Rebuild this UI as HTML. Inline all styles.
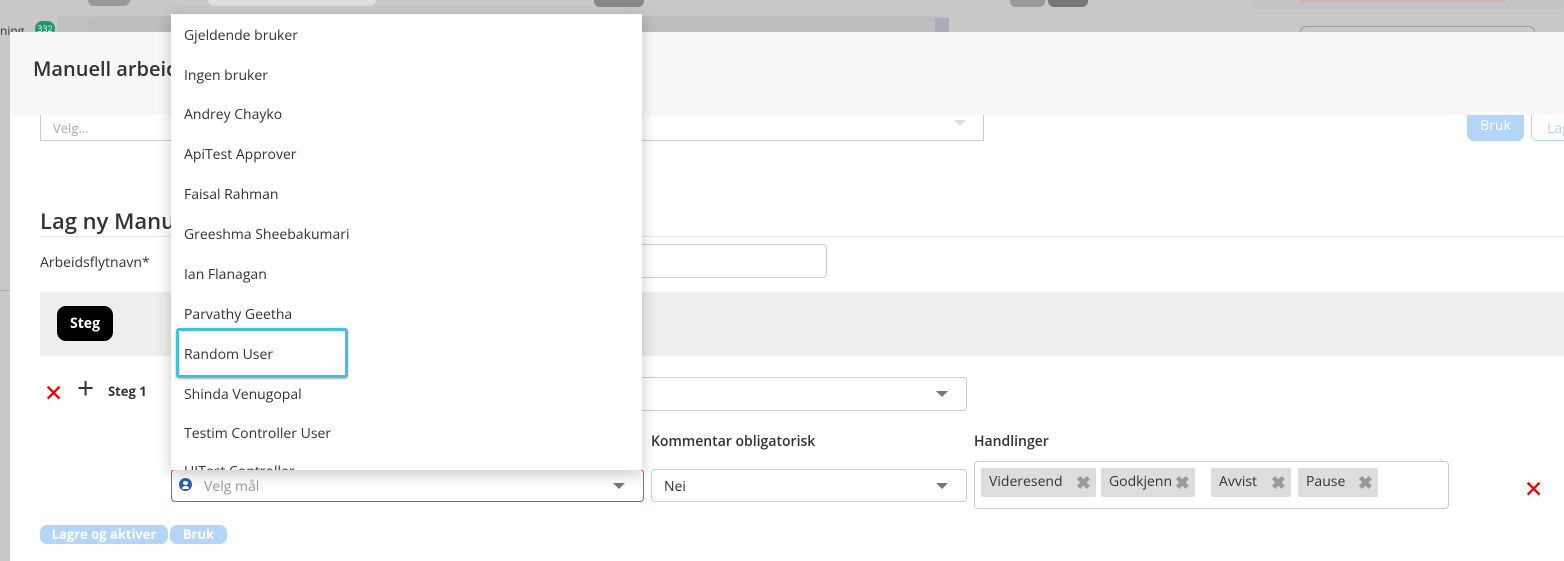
<!DOCTYPE html>
<html><head><meta charset="utf-8"><style>
*{box-sizing:border-box;margin:0;padding:0}
body{width:1564px;height:561px;overflow:hidden;background:#c8c8c8;font-family:"Open Sans","Liberation Sans",sans-serif;position:relative;color:#333}
.a{position:absolute}
.modal{left:10px;top:32px;width:1554px;height:529px;background:#fff}
.hdr{left:10px;top:32px;width:1554px;height:83px;background:#f8f8f8}
.inp{border:1px solid #ccc;border-radius:4px;background:#fff}
.caret{width:0;height:0;border-left:6px solid transparent;border-right:6px solid transparent;border-top:6px solid #777}
.dd{left:171px;top:14px;width:471px;height:456px;background:#fff;box-shadow:0 4px 14px rgba(0,0,0,.22);overflow:hidden}
.dd div{position:absolute;left:13px;font-size:14px;color:#333}
.chip{position:absolute;top:468px;height:29px;background:#ddd;border-radius:2px;font-size:14px;line-height:28px;padding-left:8px;color:#333}
.chip b{position:absolute;right:5px;top:1px;color:#999;font-size:18px}
.btn{background:#b3d6f8;color:#fff;font-size:13px;font-weight:bold;border-radius:7px;text-align:center}
</style></head><body>
<div class="a" style="left:88px;top:0;width:42px;height:6px;background:#999;border-radius:0 0 6px 6px"></div>
<div class="a" style="left:208px;top:0;width:168px;height:6px;background:#ddd;border-radius:0 0 6px 6px"></div>
<div class="a" style="left:594px;top:0;width:50px;height:7px;background:#888;border-radius:0 0 6px 6px"></div>
<div class="a" style="left:1010px;top:0;width:35px;height:7px;background:#999;border-radius:0 0 6px 6px"></div>
<div class="a" style="left:1048px;top:0;width:40px;height:7px;background:#777;border-radius:0 0 6px 6px"></div>
<div class="a" style="left:1250px;top:0;width:314px;height:10px;background:#c4c4c4;border-radius:0 0 8px 8px"></div>
<div class="a" style="left:1300px;top:0;width:205px;height:2px;background:#d8b0b0"></div>
<div class="a" style="left:57px;top:16px;width:120px;height:16px;background:#bfbfbf"></div>
<div class="a" style="left:0;top:22px;font-size:12px;color:#333">ning</div>
<div class="a" style="left:35px;top:21px;width:20px;height:15px;background:#1b9a6a;border-radius:8px;color:#fff;font-size:9px;text-align:center;line-height:15px">332</div>
<div class="a" style="left:88px;top:16px;width:860px;height:16px;background:#bdbdbd;border-radius:8px 8px 0 0"></div>
<div class="a" style="left:935px;top:18px;width:14px;height:14px;background:#aab"></div>
<div class="a" style="left:1300px;top:26px;width:235px;height:8px;border:1px solid #999;border-bottom:none;border-radius:6px 6px 0 0"></div>
<div class="a" style="left:0;top:290px;width:10px;height:1px;background:#aaa"></div>

<div class="a modal"></div>
<div class="a inp" style="left:40px;top:100px;width:944px;height:41px;border-radius:0"></div>
<div class="a" style="left:53px;top:119px;font-size:13px;color:#aaa">Velg...</div>
<div class="a caret" style="left:954px;top:120px;border-top-color:#ddd"></div>
<div class="a btn" style="left:1467px;top:108px;width:57px;height:33px;line-height:36px;font-weight:normal;font-size:14px">Bruk</div>
<div class="a" style="left:1531px;top:108px;width:40px;height:33px;border:1px solid #b3d6f8;border-radius:6px;color:#b3d6f8;font-size:14px;padding:10px 0 0 15px">Lag</div>
<div class="a hdr"></div>
<div class="a" style="left:33px;top:55px;font-size:20px;font-weight:600;color:#333">Manuell arbeidsflyt</div>

<div class="a" style="left:40px;top:206px;font-size:22px;font-weight:600;color:#333">Lag ny Manuell arbeidsflyt</div>
<div class="a" style="left:40px;top:236px;width:1524px;height:1px;background:#e5e5e5"></div>
<div class="a" style="left:40px;top:253px;font-size:14px">Arbeidsflytnavn*</div>
<div class="a inp" style="left:200px;top:244px;width:627px;height:34px"></div>
<div class="a" style="left:40px;top:292px;width:1524px;height:64px;background:#eee"></div>
<div class="a" style="left:57px;top:306px;width:56px;height:35px;background:#000;border-radius:9px;color:#fff;font-weight:bold;font-size:14px;text-align:center;line-height:35px">Steg</div>

<div class="a" style="left:44px;top:376px;font-size:23px;color:#e00">✕</div>
<div class="a" style="left:77px;top:371px;font-size:30px;color:#333;line-height:34px">+</div>
<div class="a" style="left:108px;top:382px;font-size:13px;font-weight:bold">Steg 1</div>
<div class="a inp" style="left:400px;top:377px;width:567px;height:34px"></div>
<div class="a caret" style="left:936px;top:391px"></div>

<div class="a" style="left:651px;top:432px;font-size:14px;font-weight:600">Kommentar obligatorisk</div>
<div class="a" style="left:974px;top:432px;font-size:14px;font-weight:600">Handlinger</div>
<div class="a inp" style="left:171px;top:469px;width:473px;height:33px;border-color:#e04a35"></div>
<div class="a" style="left:179px;top:478px;width:13px;height:13px;border-radius:50%;background:#2a62a8"></div>
<div class="a" style="left:183px;top:481px;width:5px;height:4px;border-radius:50%;background:#fff"></div>
<div class="a" style="left:182px;top:486px;width:7px;height:3px;border-radius:3px 3px 0 0;background:#fff"></div>
<div class="a" style="left:204px;top:477px;font-size:14px;color:#999">Velg mål</div>
<div class="a caret" style="left:613px;top:483px"></div>
<div class="a inp" style="left:651px;top:469px;width:316px;height:33px"></div>
<div class="a" style="left:664px;top:477px;font-size:14px">Nei</div>
<div class="a caret" style="left:936px;top:483px"></div>
<div class="a inp" style="left:974px;top:461px;width:475px;height:48px"></div>
<div class="a chip" style="left:981px;width:115px">Videresend<b>✖</b></div>
<div class="a chip" style="left:1101px;width:94px">Godkjenn<b>✖</b></div>
<div class="a chip" style="left:1211px;width:80px">Avvist<b>✖</b></div>
<div class="a chip" style="left:1298px;width:80px">Pause<b>✖</b></div>
<div class="a" style="left:1524px;top:472px;font-size:23px;color:#e00">✕</div>

<div class="a btn" style="left:40px;top:525px;width:128px;height:19px;line-height:19px">Lagre og aktiver</div>
<div class="a btn" style="left:170px;top:525px;width:57px;height:19px;line-height:19px">Bruk</div>

<div class="a dd">
<div style="top:12px">Gjeldende bruker</div>
<div style="top:52px">Ingen bruker</div>
<div style="top:91px">Andrey Chayko</div>
<div style="top:131px">ApiTest Approver</div>
<div style="top:171px">Faisal Rahman</div>
<div style="top:211px">Greeshma Sheebakumari</div>
<div style="top:251px">Ian Flanagan</div>
<div style="top:291px">Parvathy Geetha</div>
<div style="top:314px;left:5px;width:172px;height:50px;border:3px solid #3ec3de;border-radius:3px;box-shadow:0 1px 2px rgba(0,0,0,.3)"></div>
<div style="top:331px">Random User</div>
<div style="top:371px">Shinda Venugopal</div>
<div style="top:410px">Testim Controller User</div>
<div style="top:448px">UITest Controller</div>
</div>
</body></html>
